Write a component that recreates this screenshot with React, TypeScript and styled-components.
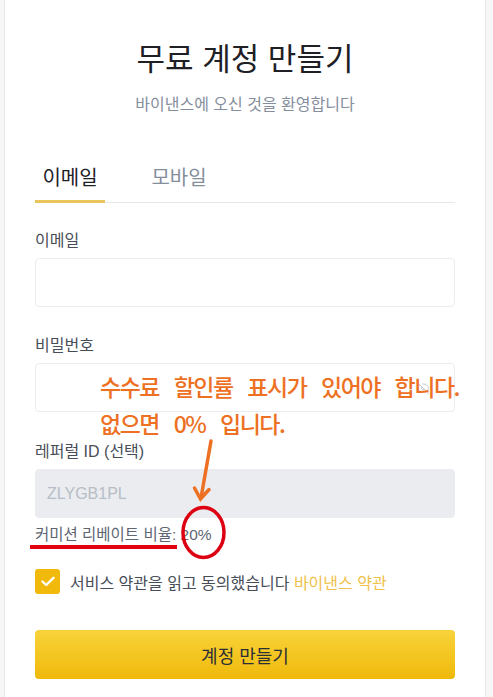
import styled, { createGlobalStyle } from "styled-components";
import { EyeOff } from "lucide-react";

const GlobalStyle = createGlobalStyle`
  html, body {
    margin: 0;
    padding: 0;
    background: #f7f7f7;
  }
  * {
    box-sizing: border-box;
  }
`;

const FONT = `"Liberation Sans", "Noto Sans CJK KR", sans-serif`;

const Card = styled.div`
  position: relative;
  margin-left: 4px;
  width: 482px;
  min-height: 100vh;
  padding: 40px 30px 0;
  background: #ffffff;
  border-left: 1px solid #e6e8ea;
  border-right: 1px solid #e6e8ea;
  font-family: ${FONT};
`;

const Title = styled.h1`
  margin: 0;
  font-size: 31px;
  line-height: 40px;
  font-weight: 400;
  color: #1e2026;
  text-align: center;
`;

const Subtitle = styled.p`
  margin: 15px 0 0;
  font-size: 16px;
  line-height: 20px;
  color: #848e9c;
  text-align: center;
`;

const Tabs = styled.div`
  display: flex;
  gap: 39px;
  margin-top: 49px;
  border-bottom: 1px solid #e6e8ea;
`;

const Tab = styled.div<{ $active?: boolean }>`
  width: 70px;
  padding-bottom: 8px;
  margin-bottom: -1px;
  font-size: 20px;
  line-height: 28px;
  text-align: center;
  color: ${(p) => (p.$active ? "#1e2026" : "#848e9c")};
  border-bottom: 3px solid ${(p) => (p.$active ? "#e8c45a" : "transparent")};
`;

const Field = styled.div<{ $gap?: number }>`
  margin-top: ${(p) => p.$gap ?? 29}px;
`;

const Label = styled.div`
  font-size: 16px;
  line-height: 20px;
  color: #474d57;
`;

const InputBox = styled.div<{ $disabled?: boolean }>`
  display: flex;
  align-items: center;
  justify-content: space-between;
  margin-top: 7px;
  height: 49px;
  padding: 0 11px;
  border: 1px solid #eaecef;
  border-radius: 4px;
  background: ${(p) => (p.$disabled ? "#eaecef" : "#ffffff")};
  font-size: 16px;
  color: #b7bdc6;
`;

const EyeSlot = styled.span`
  display: flex;
  margin-right: 13px;
`;

const Rebate = styled.div`
  margin-top: 7px;
  font-size: 15.5px;
  line-height: 20px;
  color: #5e6673;
`;

const AgreeRow = styled.div`
  display: flex;
  align-items: center;
  gap: 10px;
  margin-top: 24px;
  font-size: 16px;
  color: #474d57;
`;

const CheckBox = styled.div`
  flex: none;
  width: 25px;
  height: 25px;
  border-radius: 3px;
  background: #f0b90b;
  display: flex;
  align-items: center;
  justify-content: center;
`;

const Link = styled.span`
  color: #f0c14a;
`;

const SubmitButton = styled.button`
  display: block;
  width: 100%;
  height: 49px;
  margin-top: 36px;
  border: none;
  border-radius: 4px;
  background: linear-gradient(180deg, #f8d33a 0%, #f0b90b 100%);
  font-family: ${FONT};
  font-size: 18px;
  color: #2b2f36;
`;

const Note = styled.div`
  position: absolute;
  left: 95px;
  top: 368px;
  font-family: "Noto Sans CJK KR", sans-serif;
  font-size: 23px;
  font-weight: 500;
  line-height: 37px;
  letter-spacing: -1.5px;
  word-spacing: 11px;
  color: #ed7023;
  white-space: nowrap;
  pointer-events: none;
`;

const Marks = styled.svg`
  position: absolute;
  left: 0;
  top: 0;
  pointer-events: none;
`;

export default function App() {
  return (
    <>
      <GlobalStyle />
      <Card>
        <Title>무료 계정 만들기</Title>
        <Subtitle>바이낸스에 오신 것을 환영합니다</Subtitle>

        <Tabs>
          <Tab $active>이메일</Tab>
          <Tab>모바일</Tab>
        </Tabs>

        <Field $gap={28}>
          <Label>이메일</Label>
          <InputBox />
        </Field>

        <Field>
          <Label>비밀번호</Label>
          <InputBox>
            <span />
            <EyeSlot>
              <EyeOff size={14} color="#c4c9d0" strokeWidth={1.6} />
            </EyeSlot>
          </InputBox>
        </Field>

        <Field $gap={30}>
          <Label>레퍼럴 ID (선택)</Label>
          <InputBox $disabled>ZLYGB1PL</InputBox>
        </Field>

        <Rebate>커미션 리베이트 비율: 20%</Rebate>

        <AgreeRow>
          <CheckBox>
            <svg width="14" height="11" viewBox="0 0 14 11">
              <path d="M1.5 5.5 L5.2 9 L12.5 1.8" fill="none" stroke="#fff" strokeWidth="2.4" strokeLinecap="round" strokeLinejoin="round" />
            </svg>
          </CheckBox>
          <span>
            서비스 약관을 읽고 동의했습니다 <Link>바이낸스 약관</Link>
          </span>
        </AgreeRow>

        <SubmitButton>계정 만들기</SubmitButton>

        <Note>
          수수료 할인률 표시가 있어야 합니다.
          <br />
          없으면 0% 입니다.
        </Note>

        <Marks width="482" height="697" viewBox="0 0 482 697">
          <line x1="25" y1="547" x2="172" y2="547" stroke="#e00010" strokeWidth="4" />
          <ellipse cx="198.5" cy="532.5" rx="20.5" ry="25" fill="none" stroke="#dc0012" strokeWidth="3.5" />
          <g stroke="#ed7023" strokeWidth="3.5" strokeLinecap="round" fill="none">
            <line x1="206" y1="441" x2="196" y2="498" />
            <path d="M189.5 488 L195.5 499 L204 489.5" />
          </g>
        </Marks>
      </Card>
    </>
  );
}
